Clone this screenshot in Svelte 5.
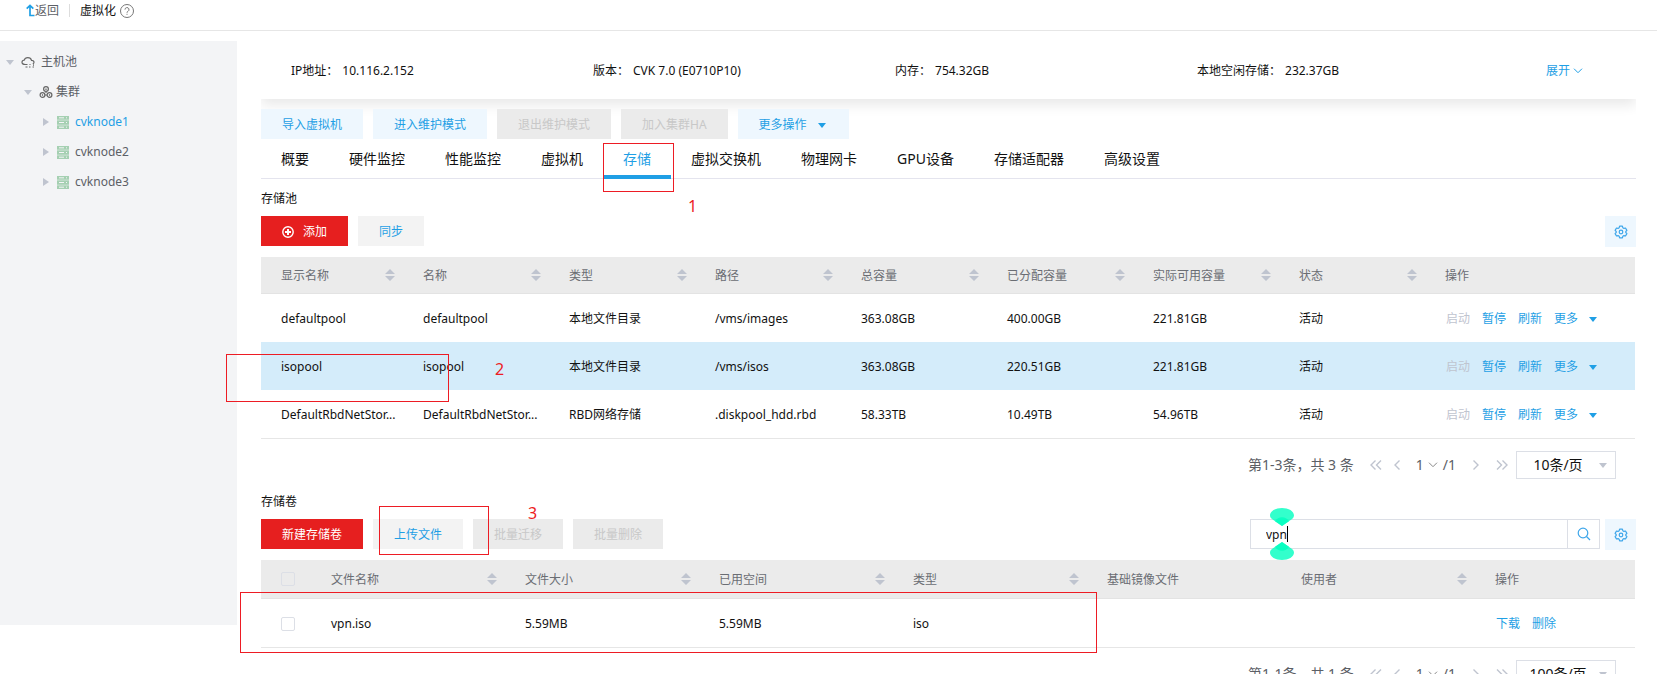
<script>
  const info = [
    ['IP地址：', '10.116.2.152'],
    ['版本：', 'CVK 7.0 (E0710P10)'],
    ['内存：', '754.32GB'],
    ['本地空闲存储：', '232.37GB']
  ];
  const tabs = ['概要', '硬件监控', '性能监控', '虚拟机', '存储', '虚拟交换机', '物理网卡', 'GPU设备', '存储适配器', '高级设置'];
  const poolCols = ['显示名称', '名称', '类型', '路径', '总容量', '已分配容量', '实际可用容量', '状态', '操作'];
  const pools = [
    ['defaultpool', 'defaultpool', '本地文件目录', '/vms/images', '363.08GB', '400.00GB', '221.81GB', '活动'],
    ['isopool', 'isopool', '本地文件目录', '/vms/isos', '363.08GB', '220.51GB', '221.81GB', '活动'],
    ['DefaultRbdNetStor...', 'DefaultRbdNetStor...', 'RBD网络存储', '.diskpool_hdd.rbd', '58.33TB', '10.49TB', '54.96TB', '活动']
  ];
  const volCols = [
    ['文件名称', true],
    ['文件大小', true],
    ['已用空间', true],
    ['类型', true],
    ['基础镜像文件', false],
    ['使用者', true],
    ['操作', false]
  ];
  let activeTab = $state('存储');
  let selected = $state(1);
  let query = $state('vpn');
</script>

{#snippet sorter()}
  <svg class="sort" width="10" height="12" viewBox="0 0 10 12" aria-hidden="true"><path d="M5 0L10 5H0zM5 12L0 7H10z" fill="#bfc4cf" /></svg>
{/snippet}

{#snippet caret(color)}
  <svg width="8" height="5" viewBox="0 0 8 5" aria-hidden="true"><path d="M0 0H8L4 5z" fill={color} /></svg>
{/snippet}

{#snippet gear()}
  <svg width="14" height="14" viewBox="0 0 14 14" fill="none" stroke="#3ea6ea" stroke-width="1.2" stroke-linejoin="round" aria-hidden="true">
    <path d="M5.600 1.200h2.800l.400 1.500 1.200.700 1.500-.400 1.400 2.400-1.100 1.100v1l1.100 1.100-1.400 2.400-1.500-.400-1.200.700-.400 1.500H5.600l-.400-1.500-1.200-.700-1.500.400-1.400-2.400 1.100-1.100v-1L1.100 5.400 2.500 3l1.500.400 1.200-.700z" />
    <circle cx="7" cy="7" r="1.800" />
  </svg>
{/snippet}

{#snippet pager(range, size)}
  <div class="pager">
    <span class="range">{range}</span>
    <button class="icon first" aria-label="首页"><svg width="12" height="10" viewBox="0 0 12 10"><path d="M5.500.500L1 5l4.500 4.500M11 .500L6.500 5 11 9.500" /></svg></button>
    <button class="icon prev" aria-label="上一页"><svg width="6" height="10" viewBox="0 0 6 10"><path d="M5.500.500L1 5l4.500 4.500" /></svg></button>
    <button class="page">1<svg width="10" height="6" viewBox="0 0 10 6"><path d="M1 .700l4 4 4-4" /></svg></button>
    <span>/1</span>
    <button class="icon next" aria-label="下一页"><svg width="6" height="10" viewBox="0 0 6 10"><path d="M.500.500L5 5 .500 9.500" /></svg></button>
    <button class="icon last" aria-label="末页"><svg width="12" height="10" viewBox="0 0 12 10"><path d="M1 .500L5.500 5 1 9.500M6.500.500L11 5l-4.500 4.500" /></svg></button>
    <span class="size">
      <select aria-label="每页条数"><option>{size}</option></select>
      {@render caret('#bfc4cf')}
    </span>
  </div>
{/snippet}

<div class="app">
  <header>
    <a class="back" href="#back">
      <svg width="9" height="13" viewBox="0 0 9 13" fill="none" stroke="#1f9fe5" stroke-width="1.700"><path d="M4 1v10.500h4.500M.700 4.700L4 1.400l3.300 3.300" /></svg>返回</a>
    <span class="sep"></span>
    <span class="title">虚拟化</span>
    <svg class="help" width="16" height="16" viewBox="0 0 16 16" fill="none" stroke="#777" stroke-width="1"><circle cx="8" cy="8" r="6.500" /><path d="M6 6.600a2 2 0 1 1 3 1.700c-.700.400-1 .700-1 1.400M8 10.800v1" /></svg>
  </header>

  <div class="body">
    <nav>
      <div class="node l1">
        {@render caret('#bfc4cf')}
        <svg class="ico" width="14" height="14" viewBox="0 0 14 14" fill="none" stroke="#666" stroke-width="1.200"><path d="M6.500 9.500H4.500C2.500 9.500 1 8.600 1 7.200S2 5.200 3.200 5.200C3.700 3.500 5 2.600 6.800 2.600s3.300 1 3.700 2.700c1.500 0 2.500.800 2.500 1.900 0 .800-.400 1.400-1.200 1.800M4.500 12h2M8 12h1.500M11.500 12H13M8.500 9.500h1M12 10.200h1" /></svg>
        <span>主机池</span>
      </div>
      <div class="node l2">
        {@render caret('#bfc4cf')}
        <svg class="ico" width="14" height="14" viewBox="0 0 14 14" fill="none" stroke="#666" stroke-width="1.200"><circle cx="7" cy="4" r="2.400" /><circle cx="3.500" cy="10" r="2.400" /><circle cx="10.500" cy="10" r="2.400" /><path d="M7 3.500v1.500M7 6.500v1.500M3.500 9.300v1.400M10.500 9.300v1.400M6 10h2" /></svg>
        <span>集群</span>
      </div>
      {#each ['cvknode1', 'cvknode2', 'cvknode3'] as name, i}
        <a class="node l3" class:current={i === 0} href={'#' + name}>
          <svg class="right" width="6" height="8" viewBox="0 0 6 8"><path d="M0 0V8L6 4z" fill="#bfc4cf" /></svg>
          <svg class="ico" width="12" height="13" viewBox="0 0 12 13"><path d="M0 0h12v3.500H0zM0 4.700h12v3.500H0zM0 9.400h12V13H0z" fill="#a5d0b2" /><path d="M0 4.100h12M0 8.800h12" stroke="#7fbd91" stroke-width=".600" /><path d="M2 1.800h5M9 1.800h1M2 6.500h5M9 6.500h1M2 11.200h5M9 11.200h1" stroke="#f3f4f6" /></svg>
          <span>{name}</span>
        </a>
      {/each}
    </nav>

    <main>
      <section class="info">
        {#each info as [k, v]}
          <div><span class="key">{k}</span><span>{v}</span></div>
        {/each}
        <button class="expand">展开<svg width="10" height="6" viewBox="0 0 10 6" fill="none" stroke="#1f9fe5"><path d="M1 .700l4 4 4-4" /></svg></button>
      </section>

      <div class="bar">
        <button class="btn light">导入虚拟机</button>
        <button class="btn light">进入维护模式</button>
        <button class="btn" disabled>退出维护模式</button>
        <button class="btn" disabled>加入集群HA</button>
        <button class="btn light more">更多操作{@render caret('#1f9fe5')}</button>
      </div>

      <div class="tabs" role="tablist">
        {#each tabs as t}
          <button role="tab" aria-selected={t === activeTab} class:active={t === activeTab} onclick={() => (activeTab = t)}>{t}</button>
        {/each}
      </div>

      <h2>存储池</h2>
      <div class="bar tools">
        <button class="btn red add"><svg width="12" height="12" viewBox="0 0 12 12" fill="none" stroke="#fff"><circle cx="6" cy="6" r="5.200" stroke-width="1.400" /><path d="M6 3v6M3 6h6" stroke-width="2" /></svg>添加</button>
        <button class="btn gray">同步</button>
        <button class="gear end" aria-label="设置">{@render gear()}</button>
      </div>

      <table class="pools">
        <colgroup>
          <col class="c-name" />
          {#each Array(7) as _}<col />{/each}
          <col class="c-ops" />
        </colgroup>
        <thead>
          <tr>
            {#each poolCols as c, i}
              <th><div class="th"><span>{c}</span>{#if i < 8}{@render sorter()}{/if}</div></th>
            {/each}
          </tr>
        </thead>
        <tbody>
          {#each pools as row, i}
            <tr class:selected={i === selected} onclick={() => (selected = i)}>
              {#each row as cell}<td>{cell}</td>{/each}
              <td>
                <div class="ops">
                  <button disabled>启动</button><button>暂停</button><button>刷新</button><button>更多{@render caret('#1f9fe5')}</button>
                </div>
              </td>
            </tr>
          {/each}
        </tbody>
      </table>
      {@render pager('第1-3条，共 3 条', '10条/页')}

      <h2 class="second">存储卷</h2>
      <div class="bar tools">
        <button class="btn red">新建存储卷</button>
        <button class="btn gray">上传文件</button>
        <button class="btn" disabled>批量迁移</button>
        <button class="btn" disabled>批量删除</button>
        <div class="search end">
          <input type="text" aria-label="搜索文件" bind:value={query} />
          <button aria-label="搜索"><svg width="14" height="14" viewBox="0 0 14 14" fill="none" stroke="#3ea6ea" stroke-width="1.200"><circle cx="6" cy="6" r="4.800" /><path d="M9.500 9.500l3.500 3.500" /></svg></button>
          <span class="cursor"></span>
          <svg class="grip" width="24" height="52" viewBox="0 0 24 52" aria-hidden="true">
            <g id="half" fill="#00ffbf" fill-opacity=".8"><path d="M12 0C18.500 0 24 3 24 7.500c0 2.500-2.500 4-5.500 6L12 18l-6.500-4.500C2.500 11.500 0 10 0 7.500 0 3 5.500 0 12 0z" /><path d="M5 13.300C8 8 16 8 19 13.300L12 18z" /></g>
            <use href="#half" transform="matrix(1 0 0 -1 0 52)" />
          </svg>
        </div>
        <button class="gear" aria-label="设置">{@render gear()}</button>
      </div>

      <table class="vols">
        <colgroup>
          <col class="c-check" />
          {#each Array(6) as _}<col />{/each}
          <col class="c-vops" />
        </colgroup>
        <thead>
          <tr>
            <th><input type="checkbox" aria-label="全选" /></th>
            {#each volCols as [c, s]}
              <th><div class="th"><span>{c}</span>{#if s}{@render sorter()}{/if}</div></th>
            {/each}
          </tr>
        </thead>
        <tbody>
          <tr>
            <td><input type="checkbox" aria-label="选择 vpn.iso" /></td>
            <td>vpn.iso</td><td>5.59MB</td><td>5.59MB</td><td>iso</td><td></td><td></td>
            <td><div class="ops"><button>下载</button><button>删除</button></div></td>
          </tr>
        </tbody>
      </table>
      {@render pager('第1-1条，共 1 条', '100条/页')}
    </main>
  </div>

  <span class="mark m1"></span><span class="num n1">1</span>
  <span class="mark m2"></span><span class="num n2">2</span>
  <span class="mark m3"></span><span class="num n3">3</span>
  <span class="mark m4"></span>
</div>

<style>
  :global(body) { background: #fff; }
  .app {
    position: relative;
    height: 100vh;
    overflow: hidden;
    font-family: "Noto Sans", "Noto Sans CJK SC", sans-serif;
    font-size: 12px;
    line-height: 18px;
    color: #111;
  }
  .app *, .app *::before { box-sizing: border-box; }
  button, input, select { font: inherit; color: inherit; margin: 0; padding: 0; border: 0; background: none; border-radius: 0; outline: 0; }
  button { cursor: pointer; white-space: nowrap; }
  button:disabled { cursor: default; }
  a { text-decoration: none; color: inherit; }
  svg { flex: none; }

  header { display: flex; align-items: center; height: 31px; padding: 0 26px 9px; border-bottom: 1px solid #e6e6e6; }
  .back { display: flex; align-items: center; color: #5c6066; }
  .sep { width: 1px; height: 13px; margin: 0 10px; background: #ddd; }
  .help { margin-left: 3px; }

  .body { display: flex; gap: 24px; padding-top: 10px; }
  nav { flex: none; width: 237px; height: calc(100vh - 90px); padding-top: 6px; background: #f3f4f6; color: #5c6066; }
  .node { display: flex; align-items: center; height: 30px; }
  .ico { margin: 0 6px 0 7px; }
  .l1 { padding-left: 6px; }
  .l2 { padding-left: 24px; }
  .l2 .ico { margin-right: 3px; }
  .l3 { padding-left: 43px; }
  .l3 .ico { margin-left: 8px; }
  .current { color: #1f9fe5; }

  main { flex: 1; min-width: 0; padding-right: 21px; }
  .info {
    display: grid;
    grid-template-columns: repeat(4, 1fr) 137px;
    align-items: center;
    height: 58px;
    padding: 2px 0 0 30px;
    background: #fff;
    box-shadow: 0 6px 12px rgba(0, 0, 0, .09);
    clip-path: inset(0 0 -20px 0);
  }
  .key { margin-right: 4px; }
  .expand { display: flex; align-items: center; gap: 3px; padding-left: 47px; color: #1f9fe5; }

  .bar { display: flex; gap: 10px; margin-top: 10px; position: relative; }
  .btn { height: 30px; padding: 2px 21px 0; background: #ebebeb; color: #c8c8c8; }
  .light { background: #eef7fe; color: #1f9fe5; }
  .gray { background: #f3f3f3; color: #1f9fe5; }
  .red { background: #e61f1f; color: #fff; }
  .more { display: flex; align-items: center; gap: 11px; padding-right: 23px; }
  .add { display: flex; align-items: center; gap: 9px; }

  .tabs { display: flex; height: 40px; border-bottom: 1px solid #e4e4ee; }
  .tabs button { height: 40px; padding: 0 20px; font-size: 14px; position: relative; }
  .tabs .active { color: #1f9fe5; }
  .tabs .active::before { content: ''; position: absolute; inset: auto 0 0; height: 4px; background: #1f9fe5; }

  h2 { margin: 11px 0 0; font-size: 12px; font-weight: 400; line-height: 18px; }
  .tools { height: 30px; margin: 8px 0 11px; }
  .end { margin-left: auto; }
  .gear { display: grid; place-items: center; width: 31px; height: 31px; background: #eef7fe; }

  table { width: calc(100% - 1px); table-layout: fixed; border-collapse: separate; border-spacing: 0; border-bottom: 1px solid #e6e6e6; }
  .c-name { width: 152px; }
  .c-ops { width: 200px; }
  .c-check { width: 60px; }
  .c-vops { width: 150px; }
  th { height: 37px; padding: 0 18px 0 10px; background: #ebebeb; border-bottom: 1px solid #e3e3e3; color: #6a6d73; font-weight: 400; text-align: left; }
  .vols th { height: 39px; }
  td { height: 48px; padding: 2px 0 0 10px; white-space: nowrap; }
  th:first-child, td:first-child { padding-left: 20px; }
  .th { display: flex; align-items: center; justify-content: space-between; }
  .th span { padding-top: 2px; }
  .selected td { background: #d4ecfa; }
  .ops { display: flex; gap: 12px; padding-left: 1px; color: #1f9fe5; }
  .ops button { display: flex; align-items: center; gap: 11px; }
  .ops button:disabled { color: #bfc4cf; }
  input[type='checkbox'] { display: block; appearance: none; width: 14px; height: 14px; border: 1px solid #dcdfe6; border-radius: 2px; }

  .pager { display: flex; align-items: center; justify-content: flex-end; margin-top: 12px; padding-right: 20px; height: 28px; font-size: 14px; color: #5c6066; }
  .pager button { display: flex; align-items: center; }
  .pager svg path { stroke: #bfc4cf; fill: none; stroke-width: 1.4; }
  .pager .page svg path { stroke: #888; stroke-width: 1; }
  .first { margin-left: 16px; }
  .prev { margin: 0 16px 0 12px; }
  .page { gap: 4px; margin-right: 5px; }
  .next { margin: 0 17px; }
  .size { position: relative; width: 100px; height: 28px; margin-left: 8px; }
  .size select { appearance: none; width: 100%; height: 100%; padding-right: 16px; border: 1px solid #dcdfe6; color: #111; background: #fff; text-align: center; text-align-last: center; }
  .size svg { position: absolute; right: 9px; top: 12px; pointer-events: none; }
  .size svg path { fill: #bfc4cf; stroke: none; }
  .second { margin-top: 14px; }

  .search { position: relative; display: flex; width: 350px; height: 30px; margin-right: -5px; border: 1px solid #dcdfe6; }
  .search input { flex: 1; min-width: 0; padding: 2px 0 0 15px; }
  .search button { width: 32px; display: grid; place-items: center; border-left: 1px solid #dcdfe6; }
  .cursor { position: absolute; left: 36px; top: 6px; width: 1px; height: 16px; background: #000; }
  .grip { position: absolute; left: 19px; top: -12px; pointer-events: none; z-index: 2; }

  .mark { position: absolute; border: 1px solid #ed1c24; pointer-events: none; }
  .num { position: absolute; color: #ed1c24; font-size: 16px; line-height: 20px; }
  .m1 { left: 603px; top: 143px; width: 71px; height: 49px; }
  .m2 { left: 226px; top: 354px; width: 223px; height: 48px; }
  .m3 { left: 379px; top: 506px; width: 110px; height: 49px; }
  .m4 { left: 240px; top: 592px; width: 857px; height: 61px; }
  .n1 { left: 688px; top: 196px; }
  .n2 { left: 495px; top: 359px; }
  .n3 { left: 528px; top: 503px; }
</style>
